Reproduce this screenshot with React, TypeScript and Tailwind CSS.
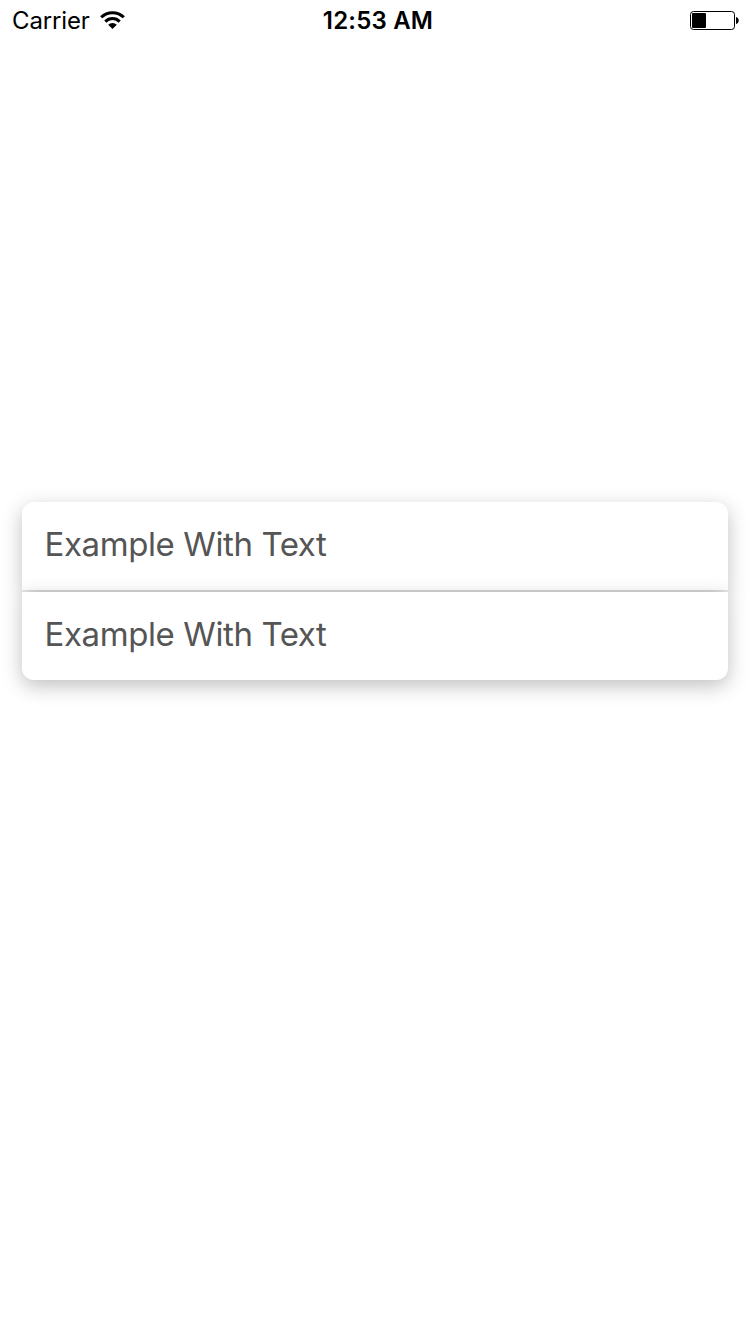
function WifiIcon() {
  return (
    <svg className="mb-[2px] ml-[10px] h-[18px] w-[25px]" viewBox="0 0 25 18" fill="none" stroke="#000">
      <path d="M1.2 6.3A16 16 0 0 1 23.8 6.3" strokeWidth="3" />
      <path d="M5.3 10.6A10.2 10.2 0 0 1 19.7 10.6" strokeWidth="3" />
      <path d="M12.5 18L8.2 13.7A6.1 6.1 0 0 1 16.8 13.7Z" fill="#000" stroke="none" />
    </svg>
  );
}

function BatteryIcon() {
  return (
    <svg className="h-[19px] w-[50px]" viewBox="0 0 50 19">
      <rect x="0.5" y="0.5" width="44" height="18" rx="3" fill="none" stroke="#000" />
      <rect x="2" y="2" width="14" height="15" rx="1" fill="#000" />
      <path d="M46 6C49.6 6.5 49.6 12.5 46 13Z" fill="#000" />
    </svg>
  );
}

function StatusBar() {
  return (
    <header className="grid h-[41px] grid-cols-[1fr_auto_1fr] items-center pr-[10px] pl-[12px] text-black">
      <div className="flex items-center text-[24px] leading-[29px] tracking-[-0.15px]">
        <span>Carrier</span>
        <WifiIcon />
      </div>
      <span className="pl-[4px] text-[24px] leading-[29px] font-semibold tracking-[0.2px]">12:53 AM</span>
      <div className="flex justify-end">
        <BatteryIcon />
      </div>
    </header>
  );
}

const cardBase =
  "flex h-[88px] items-center bg-white pr-[22px] pb-[4px] pl-[22.5px] shadow-[0_6px_20px_rgba(0,0,0,0.25)]";

export default function App() {
  return (
    <div className="flex h-[1334px] w-[750px] flex-col overflow-hidden bg-white font-['Inter','Liberation_Sans',sans-serif]">
      <StatusBar />
      <main className="mt-[461px] flex flex-col gap-[2px] px-[22px] text-[33px] leading-10 tracking-[-0.4px] text-[#555555]">
        <div className={`${cardBase} rounded-t-xl`}>
          <span>Example With Text</span>
        </div>
        <div className={`${cardBase} rounded-b-xl`}>
          <span>Example With Text</span>
        </div>
      </main>
    </div>
  );
}
